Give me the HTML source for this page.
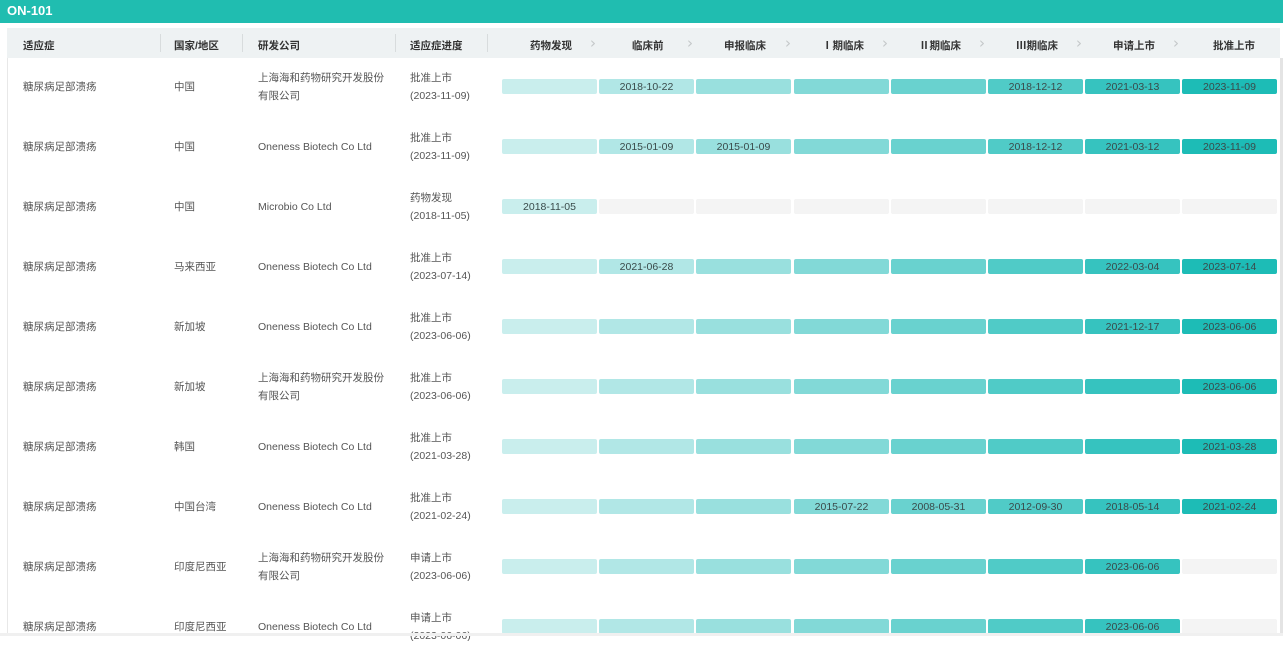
<!DOCTYPE html>
<html><head><meta charset="utf-8"><style>
*{margin:0;padding:0;box-sizing:border-box}
body{width:1283px;height:636px;overflow:hidden;background:#fff;font-family:"Liberation Sans","Noto Sans CJK SC",sans-serif;font-size:10.5px;color:#555;position:relative}
.top{position:absolute;left:0;top:0;width:1283px;height:23px;background:#20bdb0;color:#fff;font-weight:bold;font-size:13px;padding:3px 0 0 7px}
.hd{position:absolute;left:7px;top:28px;width:1273px;height:30px;background:#eef2f3}
.h{position:absolute;top:38px;font-weight:bold;color:#333;font-size:10.5px}
.sep{position:absolute;top:34px;width:1px;height:18px;background:#d8dcdd}
.ar{position:absolute;top:34px;color:#c4c8c9;font-size:15px;font-family:"DejaVu Sans",sans-serif}
.lb{position:absolute;left:7px;top:58px;width:1px;height:578px;background:#e8e8e8}
.sb{position:absolute;left:1280px;top:58px;width:3px;height:578px;background:#e4e4e4}
.row{position:absolute;left:0;width:1283px;height:60px}
.t{position:absolute;line-height:18px}
.c{position:absolute;width:95px;height:15px;border-radius:2px;display:flex;align-items:center;justify-content:center;color:#3a4a4a;font-size:10.5px;top:22px}
.s1{background:#c9eeed}.s2{background:#b1e7e6}.s3{background:#99e0de}.s4{background:#82d9d7}.s5{background:#69d2cf}.s6{background:#50cbc7}.s7{background:#36c3bf}.s8{background:#1dbcb6}.e{background:#f4f4f4}
.x1{left:502px}.x2{left:599px}.x3{left:696px}.x4{left:794px}.x5{left:891px}.x6{left:988px}.x7{left:1085px}.x8{left:1182px}
</style></head><body>
<div class="top">ON-101</div>
<div class="hd"></div>
<div class="h" style="left:23px">适应症</div>
<div class="sep" style="left:160px"></div>
<div class="h" style="left:174px">国家/地区</div>
<div class="sep" style="left:242px"></div>
<div class="h" style="left:258px">研发公司</div>
<div class="sep" style="left:395px"></div>
<div class="h" style="left:410px">适应症进度</div>
<div class="sep" style="left:487px"></div>
<div class="h" style="left:530px">药物发现</div><div class="ar" style="left:590px">›</div>
<div class="h" style="left:632px">临床前</div><div class="ar" style="left:687px">›</div>
<div class="h" style="left:724px">申报临床</div><div class="ar" style="left:785px">›</div>
<div class="h" style="left:822px">Ⅰ期临床</div><div class="ar" style="left:882px">›</div>
<div class="h" style="left:919px">Ⅱ期临床</div><div class="ar" style="left:979px">›</div>
<div class="h" style="left:1016px">Ⅲ期临床</div><div class="ar" style="left:1076px">›</div>
<div class="h" style="left:1113px">申请上市</div><div class="ar" style="left:1173px">›</div>
<div class="h" style="left:1213px">批准上市</div>
<div class="lb"></div><div class="sb"></div>

<div class="row" style="top:57px">
<div class="t" style="left:23px;top:21px">糖尿病足部溃疡</div><div class="t" style="left:174px;top:21px">中国</div>
<div class="t" style="left:258px;top:12px">上海海和药物研究开发股份<br>有限公司</div><div class="t" style="left:410px;top:12px">批准上市<br>(2023-11-09)</div>
<div class="c s1 x1"></div><div class="c s2 x2">2018-10-22</div><div class="c s3 x3"></div><div class="c s4 x4"></div><div class="c s5 x5"></div><div class="c s6 x6">2018-12-12</div><div class="c s7 x7">2021-03-13</div><div class="c s8 x8">2023-11-09</div>
</div>

<div class="row" style="top:117px">
<div class="t" style="left:23px;top:21px">糖尿病足部溃疡</div><div class="t" style="left:174px;top:21px">中国</div>
<div class="t" style="left:258px;top:21px">Oneness Biotech Co Ltd</div><div class="t" style="left:410px;top:12px">批准上市<br>(2023-11-09)</div>
<div class="c s1 x1"></div><div class="c s2 x2">2015-01-09</div><div class="c s3 x3">2015-01-09</div><div class="c s4 x4"></div><div class="c s5 x5"></div><div class="c s6 x6">2018-12-12</div><div class="c s7 x7">2021-03-12</div><div class="c s8 x8">2023-11-09</div>
</div>

<div class="row" style="top:177px">
<div class="t" style="left:23px;top:21px">糖尿病足部溃疡</div><div class="t" style="left:174px;top:21px">中国</div>
<div class="t" style="left:258px;top:21px">Microbio Co Ltd</div><div class="t" style="left:410px;top:12px">药物发现<br>(2018-11-05)</div>
<div class="c s1 x1">2018-11-05</div><div class="c e x2"></div><div class="c e x3"></div><div class="c e x4"></div><div class="c e x5"></div><div class="c e x6"></div><div class="c e x7"></div><div class="c e x8"></div>
</div>

<div class="row" style="top:237px">
<div class="t" style="left:23px;top:21px">糖尿病足部溃疡</div><div class="t" style="left:174px;top:21px">马来西亚</div>
<div class="t" style="left:258px;top:21px">Oneness Biotech Co Ltd</div><div class="t" style="left:410px;top:12px">批准上市<br>(2023-07-14)</div>
<div class="c s1 x1"></div><div class="c s2 x2">2021-06-28</div><div class="c s3 x3"></div><div class="c s4 x4"></div><div class="c s5 x5"></div><div class="c s6 x6"></div><div class="c s7 x7">2022-03-04</div><div class="c s8 x8">2023-07-14</div>
</div>

<div class="row" style="top:297px">
<div class="t" style="left:23px;top:21px">糖尿病足部溃疡</div><div class="t" style="left:174px;top:21px">新加坡</div>
<div class="t" style="left:258px;top:21px">Oneness Biotech Co Ltd</div><div class="t" style="left:410px;top:12px">批准上市<br>(2023-06-06)</div>
<div class="c s1 x1"></div><div class="c s2 x2"></div><div class="c s3 x3"></div><div class="c s4 x4"></div><div class="c s5 x5"></div><div class="c s6 x6"></div><div class="c s7 x7">2021-12-17</div><div class="c s8 x8">2023-06-06</div>
</div>

<div class="row" style="top:357px">
<div class="t" style="left:23px;top:21px">糖尿病足部溃疡</div><div class="t" style="left:174px;top:21px">新加坡</div>
<div class="t" style="left:258px;top:12px">上海海和药物研究开发股份<br>有限公司</div><div class="t" style="left:410px;top:12px">批准上市<br>(2023-06-06)</div>
<div class="c s1 x1"></div><div class="c s2 x2"></div><div class="c s3 x3"></div><div class="c s4 x4"></div><div class="c s5 x5"></div><div class="c s6 x6"></div><div class="c s7 x7"></div><div class="c s8 x8">2023-06-06</div>
</div>

<div class="row" style="top:417px">
<div class="t" style="left:23px;top:21px">糖尿病足部溃疡</div><div class="t" style="left:174px;top:21px">韩国</div>
<div class="t" style="left:258px;top:21px">Oneness Biotech Co Ltd</div><div class="t" style="left:410px;top:12px">批准上市<br>(2021-03-28)</div>
<div class="c s1 x1"></div><div class="c s2 x2"></div><div class="c s3 x3"></div><div class="c s4 x4"></div><div class="c s5 x5"></div><div class="c s6 x6"></div><div class="c s7 x7"></div><div class="c s8 x8">2021-03-28</div>
</div>

<div class="row" style="top:477px">
<div class="t" style="left:23px;top:21px">糖尿病足部溃疡</div><div class="t" style="left:174px;top:21px">中国台湾</div>
<div class="t" style="left:258px;top:21px">Oneness Biotech Co Ltd</div><div class="t" style="left:410px;top:12px">批准上市<br>(2021-02-24)</div>
<div class="c s1 x1"></div><div class="c s2 x2"></div><div class="c s3 x3"></div><div class="c s4 x4">2015-07-22</div><div class="c s5 x5">2008-05-31</div><div class="c s6 x6">2012-09-30</div><div class="c s7 x7">2018-05-14</div><div class="c s8 x8">2021-02-24</div>
</div>

<div class="row" style="top:537px">
<div class="t" style="left:23px;top:21px">糖尿病足部溃疡</div><div class="t" style="left:174px;top:21px">印度尼西亚</div>
<div class="t" style="left:258px;top:12px">上海海和药物研究开发股份<br>有限公司</div><div class="t" style="left:410px;top:12px">申请上市<br>(2023-06-06)</div>
<div class="c s1 x1"></div><div class="c s2 x2"></div><div class="c s3 x3"></div><div class="c s4 x4"></div><div class="c s5 x5"></div><div class="c s6 x6"></div><div class="c s7 x7">2023-06-06</div><div class="c e x8"></div>
</div>

<div class="row" style="top:597px">
<div class="t" style="left:23px;top:21px">糖尿病足部溃疡</div><div class="t" style="left:174px;top:21px">印度尼西亚</div>
<div class="t" style="left:258px;top:21px">Oneness Biotech Co Ltd</div><div class="t" style="left:410px;top:12px">申请上市<br>(2023-06-06)</div>
<div class="c s1 x1"></div><div class="c s2 x2"></div><div class="c s3 x3"></div><div class="c s4 x4"></div><div class="c s5 x5"></div><div class="c s6 x6"></div><div class="c s7 x7">2023-06-06</div><div class="c e x8"></div>
</div>
<div style="position:absolute;left:0;top:633px;width:1283px;height:3px;background:#f0f0f0"></div>
</body></html>
